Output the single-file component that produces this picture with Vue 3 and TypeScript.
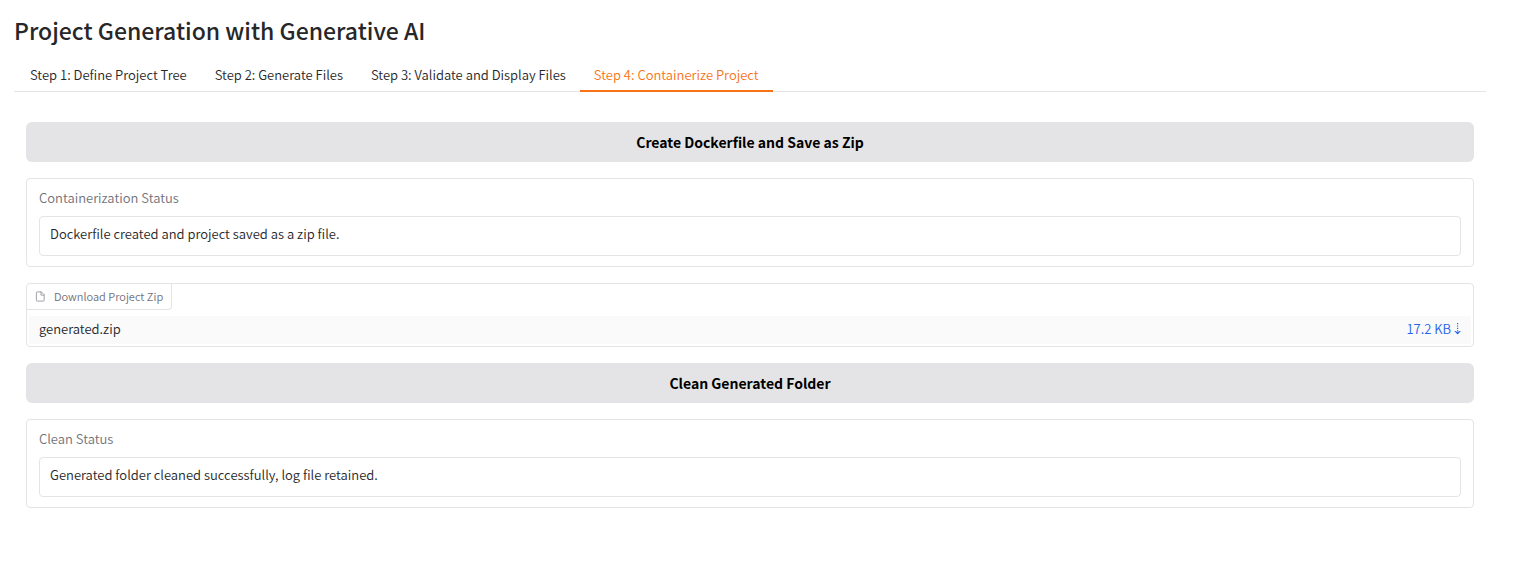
<script setup lang="ts">
import { ref } from 'vue'

const tabs: string[] = [
  'Step 1: Define Project Tree',
  'Step 2: Generate Files',
  'Step 3: Validate and Display Files',
  'Step 4: Containerize Project',
]
const active = ref(3)
const containerStatus = ref('Dockerfile created and project saved as a zip file.')
const cleanStatus = ref('Generated folder cleaned successfully, log file retained.')
</script>

<template>
  <main class="app">
    <h1>Project Generation with Generative AI</h1>
    <div class="tabs" role="tablist">
      <button
        v-for="(tab, i) in tabs"
        :key="tab"
        type="button"
        role="tab"
        class="tab"
        :class="{ selected: i === active }"
        :aria-selected="i === active"
        @click="active = i"
      >{{ tab }}</button>
    </div>
    <section class="panel">
      <button type="button" class="action">Create Dockerfile and Save as Zip</button>
      <div class="block field">
        <label for="container-status">Containerization Status</label>
        <textarea id="container-status" v-model="containerStatus" rows="1" readonly></textarea>
      </div>
      <div class="block file">
        <div class="file-label">
          <svg viewBox="0 0 24 24" fill="none" stroke="currentColor" stroke-width="2" stroke-linecap="round" stroke-linejoin="round" aria-hidden="true">
            <path d="M13 2H5a2 2 0 0 0-2 2v16a2 2 0 0 0 2 2h13a2 2 0 0 0 2-2V9z" />
            <path d="M13 2v7h7" />
          </svg>
          <span>Download Project Zip</span>
        </div>
        <div class="file-row">
          <span>generated.zip</span>
          <a href="#generated.zip" download="generated.zip">
            <span>17.2 KB</span>
            <svg viewBox="0 0 7 12" fill="currentColor" aria-hidden="true">
              <path d="M3 0h1.2v1.2H3zM3 2.4h1.2v1.2H3zM3 4.8h1.2V6H3zM3 7.2h1.2v1.4H3zM0.3 8h1.2l2.1 1.2L5.700 8h1.2L3.600 11.600z" />
            </svg>
          </a>
        </div>
      </div>
      <button type="button" class="action">Clean Generated Folder</button>
      <div class="block field">
        <label for="clean-status">Clean Status</label>
        <textarea id="clean-status" v-model="cleanStatus" rows="1" readonly></textarea>
      </div>
    </section>
  </main>
</template>

<style>
body {
  background: #fff;
}
</style>

<style scoped>
.app,
.app button,
.app textarea {
  font-family: "Noto Sans CJK SC", "Noto Sans", sans-serif;
}
.app,
.app * {
  box-sizing: border-box;
}
.app {
  padding: 14px 44px 52px 14px;
  color: #27272a;
  font-size: 13px;
  font-weight: 350;
  line-height: 20px;
}
h1 {
  margin: 0 0 14px;
  font-size: 23px;
  line-height: 32px;
  font-weight: 500;
}
.tabs {
  display: flex;
  padding-left: 2px;
  border-bottom: 1px solid #e4e4e7;
}
.tab {
  margin-bottom: -1px;
  padding: 5px 14px;
  border: 0;
  border-bottom: 2px solid transparent;
  background: none;
  color: #27272a;
  font-size: 13px;
  font-weight: 350;
  line-height: 20px;
  white-space: nowrap;
  cursor: pointer;
}
.tab.selected {
  border-bottom-color: #f97316;
  color: #f97316;
}
.panel {
  display: flex;
  flex-direction: column;
  gap: 16px;
  padding: 30px 12px 0;
}
.action {
  height: 40px;
  padding: 0 12px;
  border: 0;
  border-radius: 6px;
  background: #e4e4e6;
  color: #000;
  font-size: 14px;
  font-weight: 700;
  cursor: pointer;
}
.block {
  border: 1px solid #e4e4e7;
  border-radius: 4px;
}
.field {
  display: flex;
  flex-direction: column;
  gap: 8px;
  padding: 9px 12px 10px;
}
.field label {
  color: #71717a;
}
.field textarea {
  display: block;
  width: 100%;
  height: 40px;
  padding: 7px 10px;
  border: 1px solid #e4e4e7;
  border-radius: 4px;
  background: #fff;
  color: #27272a;
  font-size: 13px;
  font-weight: 350;
  line-height: 20px;
  resize: none;
  overflow: hidden;
  outline: none;
}
.file {
  display: flex;
  flex-direction: column;
  align-items: flex-start;
  gap: 6px;
  padding-bottom: 2px;
}
.file-label {
  display: flex;
  align-items: center;
  gap: 8px;
  height: 26px;
  padding: 0 8px;
  border-right: 1px solid #e4e4e7;
  border-bottom: 1px solid #e4e4e7;
  border-bottom-right-radius: 4px;
  color: #71717a;
  font-size: 11px;
}
.file-label span {
  padding-bottom: 2px;
}
.file-label svg {
  width: 11px;
  height: 11px;
  opacity: 0.7;
}
.file-row {
  display: flex;
  align-items: center;
  justify-content: space-between;
  align-self: stretch;
  height: 28px;
  margin: 0 2px;
  padding: 0 10px 2px;
  background: #fafafa;
}
.file-row a {
  display: flex;
  align-items: center;
  gap: 3px;
  color: #2563eb;
  text-decoration: none;
}
.file-row svg {
  width: 7px;
  height: 12px;
}
</style>
